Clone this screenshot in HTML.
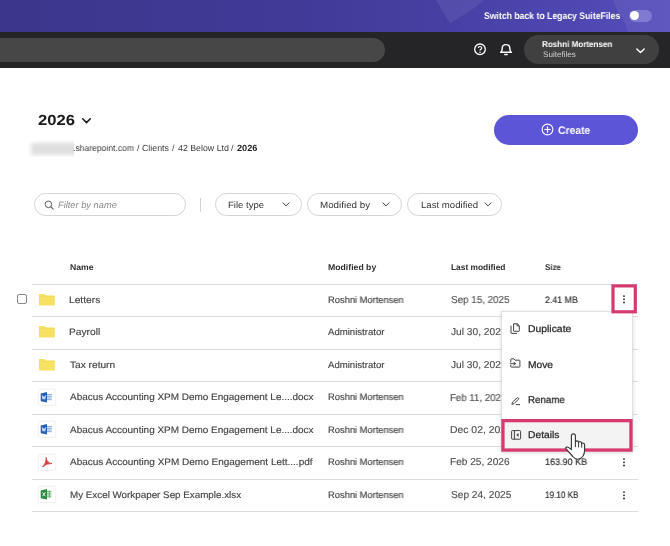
<!DOCTYPE html>
<html>
<head>
<meta charset="utf-8">
<style>
*{box-sizing:border-box;margin:0;padding:0}
html,body{width:670px;height:546px;overflow:hidden;background:#fff;font-family:"Liberation Sans",sans-serif;color:#222}
body{position:relative}
.a{position:absolute}
.t{position:absolute;white-space:nowrap;line-height:1;transform-origin:0 0;will-change:transform;text-rendering:geometricPrecision}
.ln{position:absolute;left:32px;width:606px;height:1px;background:#dcdcdc}
.pill{position:absolute;top:192.5px;height:23px;border:1px solid #d4d4d4;border-radius:12px;background:#fff}
svg{position:absolute;overflow:visible}
</style>
</head>
<body>
<!-- top purple bar -->
<div class="a" style="left:0;top:0;width:670px;height:32px;background:linear-gradient(90deg,#3b378c 0%,#403b97 45%,#4841a6 70%,#554dbb 100%)"></div>
<svg style="left:0;top:0" width="670" height="32" viewBox="0 0 670 32">
  <polygon points="436,0 484,0 476,7 450,23.5" fill="#fff" opacity="0.07"/>
  <path d="M613 0 L670 0 L670 32 L628 32 Q626 24 621 17 Q616 9 613 0 Z" fill="#fff" opacity="0.065"/>
</svg>
<div class="a" style="left:629px;top:10px;width:23px;height:11.5px;border-radius:6px;background:#807ad3"></div>
<div class="a" style="left:630.3px;top:11.2px;width:9px;height:9px;border-radius:50%;background:#fff"></div>

<!-- dark nav -->
<div class="a" style="left:0;top:32px;width:670px;height:35.5px;background:#252527"></div>
<div class="a" style="left:-20px;top:37.5px;width:405px;height:24.5px;border-radius:12.5px;background:#474747"></div>
<svg style="left:473px;top:43px" width="14" height="14" viewBox="0 0 14 14">
  <circle cx="7" cy="6.3" r="5.3" fill="none" stroke="#fff" stroke-width="1.3"/>
  <path d="M5.3 5.1 C5.3 3.0 8.7 3.0 8.7 5.0 C8.7 6.3 7 6.3 7 7.6" fill="none" stroke="#fff" stroke-width="1.2"/>
  <circle cx="7" cy="9.2" r="0.8" fill="#fff"/>
</svg>
<svg style="left:499px;top:43px" width="14" height="14" viewBox="0 0 14 14">
  <path d="M1.6 9.3 C3.2 8.2 3.2 7 3.2 5.4 C3.2 2.9 4.9 1.6 7 1.6 C9.1 1.6 10.8 2.9 10.8 5.4 C10.8 7 10.8 8.2 12.4 9.3 Z" fill="none" stroke="#fff" stroke-width="1.45" stroke-linejoin="round"/>
  <path d="M5.8 11.6 L8.2 11.6" stroke="#fff" stroke-width="1.5" stroke-linecap="round"/>
</svg>
<div class="a" style="left:523.5px;top:35.3px;width:135.8px;height:28.8px;border-radius:14.4px;background:#404040"></div>
<svg style="left:636px;top:47.8px" width="9" height="6" viewBox="0 0 9 6">
  <path d="M0.8 0.9 L4.5 4.6 L8.2 0.9" fill="none" stroke="#fff" stroke-width="1.4" stroke-linecap="round" stroke-linejoin="round"/>
</svg>

<!-- title chevron + blur -->
<svg style="left:82px;top:118px" width="9" height="6" viewBox="0 0 9 6">
  <path d="M0.7 0.8 L4.5 4.6 L8.3 0.8" fill="none" stroke="#1a1a1a" stroke-width="1.5" stroke-linecap="round" stroke-linejoin="round"/>
</svg>
<div class="a" style="left:28px;top:140px;width:45.5px;height:17px;overflow:hidden"><div class="a" style="left:3px;top:3px;width:52px;height:11.5px;background:#dedede;filter:blur(2px)"></div></div>

<!-- create button -->
<div class="a" style="left:493.5px;top:115px;width:144.5px;height:29.5px;border-radius:15px;background:#5c55d7"></div>
<svg style="left:540.5px;top:123.2px" width="13" height="13" viewBox="0 0 13 13">
  <circle cx="6.5" cy="6.5" r="5.4" fill="none" stroke="#fff" stroke-width="1.1"/>
  <path d="M6.5 3.8 L6.5 9.2 M3.8 6.5 L9.2 6.5" stroke="#fff" stroke-width="1.2" stroke-linecap="round"/>
</svg>

<!-- filters -->
<div class="pill" style="left:33.5px;width:152px"></div>
<svg style="left:44px;top:200px" width="10" height="10" viewBox="0 0 10 10">
  <circle cx="4.4" cy="4.3" r="3.3" fill="none" stroke="#555" stroke-width="0.95"/>
  <path d="M6.9 6.8 L9.2 9.1" stroke="#555" stroke-width="1.05" stroke-linecap="round"/>
</svg>
<div class="a" style="left:200px;top:197.5px;width:1px;height:14px;background:#d2d2d2"></div>
<div class="pill" style="left:215px;width:87px"></div>
<div class="pill" style="left:307px;width:95px"></div>
<div class="pill" style="left:407px;width:95px"></div>
<svg style="left:282.2px;top:202px" width="8" height="5" viewBox="0 0 8 5"><path d="M0.9 0.8 L4 3.9 L7.1 0.8" fill="none" stroke="#444" stroke-width="1" stroke-linecap="round" stroke-linejoin="round"/></svg>
<svg style="left:382.2px;top:202px" width="8" height="5" viewBox="0 0 8 5"><path d="M0.9 0.8 L4 3.9 L7.1 0.8" fill="none" stroke="#444" stroke-width="1" stroke-linecap="round" stroke-linejoin="round"/></svg>
<svg style="left:483.5px;top:202px" width="8" height="5" viewBox="0 0 8 5"><path d="M0.9 0.8 L4 3.9 L7.1 0.8" fill="none" stroke="#444" stroke-width="1" stroke-linecap="round" stroke-linejoin="round"/></svg>

<!-- table lines -->
<div class="ln" style="top:284px"></div>
<div class="ln" style="top:316px"></div>
<div class="ln" style="top:349px"></div>
<div class="ln" style="top:381px"></div>
<div class="ln" style="top:414px"></div>
<div class="ln" style="top:446px"></div>
<div class="ln" style="top:479px"></div>
<div class="ln" style="top:511px"></div>

<!-- checkbox -->
<div class="a" style="left:17.3px;top:294.2px;width:10px;height:9.8px;border:1px solid #8a8a8a;border-radius:2px;background:#fff"></div>

<!-- folders -->
<svg style="left:38.8px;top:294.2px" width="16" height="12" viewBox="0 0 16 12"><path d="M0 0.6 Q0 0 0.6 0 L5.6 0 L6.8 1.4 L15.2 1.4 Q15.8 1.4 15.8 2 L15.8 10.9 Q15.8 11.5 15.2 11.5 L0.6 11.5 Q0 11.5 0 10.9 Z" fill="#f6e163"/><path d="M0 2.3 L15.8 2.3" stroke="#ecd44f" stroke-width="0.5"/></svg>
<svg style="left:38.8px;top:326.2px" width="16" height="12" viewBox="0 0 16 12"><path d="M0 0.6 Q0 0 0.6 0 L5.6 0 L6.8 1.4 L15.2 1.4 Q15.8 1.4 15.8 2 L15.8 10.9 Q15.8 11.5 15.2 11.5 L0.6 11.5 Q0 11.5 0 10.9 Z" fill="#f6e163"/><path d="M0 2.3 L15.8 2.3" stroke="#ecd44f" stroke-width="0.5"/></svg>
<svg style="left:38.8px;top:358.7px" width="16" height="12" viewBox="0 0 16 12"><path d="M0 0.6 Q0 0 0.6 0 L5.6 0 L6.8 1.4 L15.2 1.4 Q15.8 1.4 15.8 2 L15.8 10.9 Q15.8 11.5 15.2 11.5 L0.6 11.5 Q0 11.5 0 10.9 Z" fill="#f6e163"/><path d="M0 2.3 L15.8 2.3" stroke="#ecd44f" stroke-width="0.5"/></svg>

<!-- word icons -->
<svg style="left:37.7px;top:388.8px" width="18" height="17" viewBox="0 0 18 17">
  <rect x="0.25" y="0.25" width="17.5" height="16.2" rx="1" fill="#fff" stroke="#e6e6e6" stroke-width="0.6"/>
  <path d="M9 5.6 H13.8 M9 7.3 H13.8 M9 9 H13.8 M9 10.7 H13.8" stroke="#5b8ad4" stroke-width="0.8"/>
  <path d="M2.7 4.4 L9 3.1 L9 13.5 L2.7 12.2 Z" fill="#2a5fb6"/>
  <path d="M4.2 6.4 L5.05 10.2 L5.9 7.4 L6.75 10.2 L7.6 6.4" fill="none" stroke="#fff" stroke-width="0.75"/>
</svg>
<svg style="left:37.7px;top:421.3px" width="18" height="17" viewBox="0 0 18 17">
  <rect x="0.25" y="0.25" width="17.5" height="16.2" rx="1" fill="#fff" stroke="#e6e6e6" stroke-width="0.6"/>
  <path d="M9 5.6 H13.8 M9 7.3 H13.8 M9 9 H13.8 M9 10.7 H13.8" stroke="#5b8ad4" stroke-width="0.8"/>
  <path d="M2.7 4.4 L9 3.1 L9 13.5 L2.7 12.2 Z" fill="#2a5fb6"/>
  <path d="M4.2 6.4 L5.05 10.2 L5.9 7.4 L6.75 10.2 L7.6 6.4" fill="none" stroke="#fff" stroke-width="0.75"/>
</svg>
<!-- pdf icon -->
<svg style="left:37.7px;top:453.8px" width="18" height="17" viewBox="0 0 18 17">
  <rect x="0.25" y="0.25" width="17.5" height="16.2" rx="1" fill="#fff" stroke="#e6e6e6" stroke-width="0.6"/>
  <path d="M8.2 3.7 Q8.5 8.7 14 9.5 Q8.8 9.2 4.5 12.9 Q8.5 8.9 8.2 3.7 Z" fill="#d23b42" stroke="#d23b42" stroke-width="0.75" stroke-linejoin="round" stroke-linecap="round"/>
</svg>
<!-- excel icon -->
<svg style="left:37.7px;top:486.3px" width="18" height="17" viewBox="0 0 18 17">
  <rect x="0.25" y="0.25" width="17.5" height="16.2" rx="1" fill="#fff" stroke="#e6e6e6" stroke-width="0.6"/>
  <path d="M9 5.4 H13.4 M9 7.2 H13.4 M9 9 H13.4 M9 10.8 H13.4 M11.4 4.6 V11.6" stroke="#4da05c" stroke-width="0.8"/>
  <path d="M2.7 4.4 L9 3.1 L9 13.5 L2.7 12.2 Z" fill="#2e8b42"/>
  <path d="M4.5 6.4 L7.3 10.2 M7.3 6.4 L4.5 10.2" fill="none" stroke="#fff" stroke-width="0.85"/>
</svg>

<div class="t" style="left:484.08px;top:12px;font-size:9.7px;font-weight:bold;font-style:normal;color:#fff;transform:scaleX(0.8942)">Switch back to Legacy SuiteFiles</div>
<div class="t" style="left:542.41px;top:40px;font-size:8.5px;font-weight:bold;font-style:normal;color:#fff;transform:scaleX(0.9479)">Roshni Mortensen</div>
<div class="t" style="left:542.62px;top:51px;font-size:8px;font-weight:normal;font-style:normal;color:#cfcfcf;transform:scaleX(1.0142)">Suitefiles</div>
<div class="t" style="left:38.43px;top:114px;font-size:14.6px;font-weight:bold;font-style:normal;color:#1a1a1a;transform:scaleX(1.1410)">2026</div>
<div class="t" style="left:73.07px;top:144px;font-size:8.8px;font-weight:normal;font-style:normal;color:#3a3a3a;transform:scaleX(0.9747)">.sharepoint.com</div>
<div class="t" style="left:137.01px;top:144px;font-size:8.8px;font-weight:normal;font-style:normal;color:#3a3a3a;transform:scaleX(1.0000)">/</div>
<div class="t" style="left:142.01px;top:144px;font-size:8.8px;font-weight:normal;font-style:normal;color:#3a3a3a;transform:scaleX(0.9837)">Clients</div>
<div class="t" style="left:171.61px;top:144px;font-size:8.8px;font-weight:normal;font-style:normal;color:#3a3a3a;transform:scaleX(1.0000)">/</div>
<div class="t" style="left:177.75px;top:144px;font-size:8.8px;font-weight:normal;font-style:normal;color:#3a3a3a;transform:scaleX(0.9920)">42 Below Ltd</div>
<div class="t" style="left:231.01px;top:144px;font-size:8.8px;font-weight:normal;font-style:normal;color:#3a3a3a;transform:scaleX(1.0000)">/</div>
<div class="t" style="left:236.94px;top:144px;font-size:8.8px;font-weight:bold;font-style:normal;color:#222;transform:scaleX(1.0421)">2026</div>
<div class="t" style="left:558.03px;top:126px;font-size:11px;font-weight:bold;font-style:normal;color:#fff;transform:scaleX(0.9438)">Create</div>
<div class="t" style="left:57.55px;top:201px;font-size:9.2px;font-weight:normal;font-style:italic;color:#8a8a8a;transform:scaleX(1.0100)">Filter by name</div>
<div class="t" style="left:227.52px;top:201px;font-size:9.2px;font-weight:normal;font-style:normal;color:#333;transform:scaleX(1.0379)">File type</div>
<div class="t" style="left:320.00px;top:201px;font-size:9.2px;font-weight:normal;font-style:normal;color:#333;transform:scaleX(1.0667)">Modified by</div>
<div class="t" style="left:420.52px;top:201px;font-size:9.2px;font-weight:normal;font-style:normal;color:#333;transform:scaleX(1.0460)">Last modified</div>
<div class="t" style="left:69.68px;top:263px;font-size:8.4px;font-weight:bold;font-style:normal;color:#2e2e2e;transform:scaleX(1.0318)">Name</div>
<div class="t" style="left:327.88px;top:263px;font-size:8.4px;font-weight:bold;font-style:normal;color:#2e2e2e;transform:scaleX(1.0370)">Modified by</div>
<div class="t" style="left:450.80px;top:263px;font-size:8.4px;font-weight:bold;font-style:normal;color:#2e2e2e;transform:scaleX(0.9967)">Last modified</div>
<div class="t" style="left:545.16px;top:263px;font-size:8.4px;font-weight:bold;font-style:normal;color:#2e2e2e;transform:scaleX(0.9538)">Size</div>
<div class="t" style="left:69.49px;top:296px;font-size:9.5px;font-weight:normal;font-style:normal;color:#444;-webkit-text-stroke:0.15px #444;transform:scaleX(1.0762)">Letters</div>
<div class="t" style="left:69.49px;top:328px;font-size:9.5px;font-weight:normal;font-style:normal;color:#444;-webkit-text-stroke:0.15px #444;transform:scaleX(1.0751)">Payroll</div>
<div class="t" style="left:70.03px;top:361px;font-size:9.5px;font-weight:normal;font-style:normal;color:#444;-webkit-text-stroke:0.15px #444;transform:scaleX(1.0683)">Tax return</div>
<div class="t" style="left:70.30px;top:393px;font-size:9.5px;font-weight:normal;font-style:normal;color:#444;-webkit-text-stroke:0.15px #444;transform:scaleX(1.0480)">Abacus Accounting XPM Demo Engagement Le....docx</div>
<div class="t" style="left:70.30px;top:426px;font-size:9.5px;font-weight:normal;font-style:normal;color:#444;-webkit-text-stroke:0.15px #444;transform:scaleX(1.0480)">Abacus Accounting XPM Demo Engagement Le....docx</div>
<div class="t" style="left:70.30px;top:458px;font-size:9.5px;font-weight:normal;font-style:normal;color:#444;-webkit-text-stroke:0.15px #444;transform:scaleX(1.0509)">Abacus Accounting XPM Demo Engagement Lett....pdf</div>
<div class="t" style="left:69.53px;top:491px;font-size:9.5px;font-weight:normal;font-style:normal;color:#444;-webkit-text-stroke:0.15px #444;transform:scaleX(1.0331)">My Excel Workpaper Sep Example.xlsx</div>
<div class="t" style="left:327.65px;top:295px;font-size:9.4px;font-weight:normal;font-style:normal;color:#444;-webkit-text-stroke:0.15px #444;transform:scaleX(0.9940)">Roshni Mortensen</div>
<div class="t" style="left:328.40px;top:327px;font-size:9.4px;font-weight:normal;font-style:normal;color:#444;-webkit-text-stroke:0.15px #444;transform:scaleX(1.0231)">Administrator</div>
<div class="t" style="left:328.40px;top:360px;font-size:9.4px;font-weight:normal;font-style:normal;color:#444;-webkit-text-stroke:0.15px #444;transform:scaleX(1.0231)">Administrator</div>
<div class="t" style="left:327.65px;top:392px;font-size:9.4px;font-weight:normal;font-style:normal;color:#444;-webkit-text-stroke:0.15px #444;transform:scaleX(0.9940)">Roshni Mortensen</div>
<div class="t" style="left:327.65px;top:425px;font-size:9.4px;font-weight:normal;font-style:normal;color:#444;-webkit-text-stroke:0.15px #444;transform:scaleX(0.9940)">Roshni Mortensen</div>
<div class="t" style="left:327.65px;top:457px;font-size:9.4px;font-weight:normal;font-style:normal;color:#444;-webkit-text-stroke:0.15px #444;transform:scaleX(0.9940)">Roshni Mortensen</div>
<div class="t" style="left:327.65px;top:490px;font-size:9.4px;font-weight:normal;font-style:normal;color:#444;-webkit-text-stroke:0.15px #444;transform:scaleX(0.9940)">Roshni Mortensen</div>
<div class="t" style="left:450.81px;top:296px;font-size:10px;font-weight:normal;font-style:normal;color:#505050;-webkit-text-stroke:0.15px #505050;transform:scaleX(0.9842)">Sep 15, 2025</div>
<div class="t" style="left:451.17px;top:328px;font-size:10px;font-weight:normal;font-style:normal;color:#505050;-webkit-text-stroke:0.15px #505050;transform:scaleX(1.0185)">Jul 30, 2025</div>
<div class="t" style="left:451.17px;top:361px;font-size:10px;font-weight:normal;font-style:normal;color:#505050;-webkit-text-stroke:0.15px #505050;transform:scaleX(1.0185)">Jul 30, 2025</div>
<div class="t" style="left:450.45px;top:394px;font-size:10px;font-weight:normal;font-style:normal;color:#505050;-webkit-text-stroke:0.15px #505050;transform:scaleX(0.9670)">Feb 11, 2026</div>
<div class="t" style="left:450.39px;top:426px;font-size:10px;font-weight:normal;font-style:normal;color:#505050;-webkit-text-stroke:0.15px #505050;transform:scaleX(1.0386)">Dec 02, 2025</div>
<div class="t" style="left:450.41px;top:458px;font-size:10px;font-weight:normal;font-style:normal;color:#505050;-webkit-text-stroke:0.15px #505050;transform:scaleX(1.0117)">Feb 25, 2026</div>
<div class="t" style="left:450.79px;top:491px;font-size:10px;font-weight:normal;font-style:normal;color:#505050;-webkit-text-stroke:0.15px #505050;transform:scaleX(1.0132)">Sep 24, 2025</div>
<div class="t" style="left:544.93px;top:295px;font-size:9.4px;font-weight:normal;font-style:normal;color:#333;-webkit-text-stroke:0.2px #333;transform:scaleX(0.9417)">2.41 MB</div>
<div class="t" style="left:544.68px;top:457px;font-size:9.4px;font-weight:normal;font-style:normal;color:#333;-webkit-text-stroke:0.2px #333;transform:scaleX(0.9624)">163.90 KB</div>
<div class="t" style="left:544.75px;top:490px;font-size:9.4px;font-weight:normal;font-style:normal;color:#333;-webkit-text-stroke:0.2px #333;transform:scaleX(0.8696)">19.10 KB</div>


<!-- kebabs -->
<svg style="left:623.4px;top:295px" width="2" height="9" viewBox="0 0 2 9"><circle cx="1" cy="1.1" r="0.9" fill="#222"/><circle cx="1" cy="4.3" r="0.9" fill="#222"/><circle cx="1" cy="7.5" r="0.9" fill="#222"/></svg>
<svg style="left:623.4px;top:457.5px" width="2" height="9" viewBox="0 0 2 9"><circle cx="1" cy="1.1" r="0.9" fill="#222"/><circle cx="1" cy="4.3" r="0.9" fill="#222"/><circle cx="1" cy="7.5" r="0.9" fill="#222"/></svg>
<svg style="left:623.4px;top:490.5px" width="2" height="9" viewBox="0 0 2 9"><circle cx="1" cy="1.1" r="0.9" fill="#222"/><circle cx="1" cy="4.3" r="0.9" fill="#222"/><circle cx="1" cy="7.5" r="0.9" fill="#222"/></svg>

<!-- menu -->
<div class="a" style="left:501px;top:311.3px;width:131.6px;height:140.5px;background:#fff;border:1px solid #e0e0e0;box-shadow:0 1px 4px rgba(0,0,0,0.14)"></div>
<div class="a" style="left:503px;top:421px;width:128px;height:29px;background:#f3f3f3"></div>
<!-- duplicate icon -->
<svg style="left:509.5px;top:322.5px" width="11" height="11" viewBox="0 0 11 11">
  <path d="M3.6 0.8 L7.4 0.8 L9.3 2.7 L9.3 7.8 Q9.3 8.3 8.8 8.3 L4.1 8.3 Q3.6 8.3 3.6 7.8 Z" fill="none" stroke="#383838" stroke-width="0.95" stroke-linejoin="round"/>
  <path d="M7.2 0.9 L7.2 2.9 L9.2 2.9" fill="none" stroke="#383838" stroke-width="0.95"/>
  <path d="M1 3.2 L1 9.9 Q1 10.4 1.5 10.4 L6.6 10.4" fill="none" stroke="#383838" stroke-width="0.95" stroke-linecap="round"/>
</svg>
<!-- move icon -->
<svg style="left:509.5px;top:357.5px" width="11" height="10" viewBox="0 0 11 10">
  <path d="M0.8 4 L0.8 1.3 Q0.8 0.8 1.3 0.8 L3.8 0.8 L5 2.2 L9.4 2.2 Q9.9 2.2 9.9 2.7 L9.9 8.6 Q9.9 9.1 9.4 9.1 L1.3 9.1 Q0.8 9.1 0.8 8.6 L0.8 7.4" fill="none" stroke="#383838" stroke-width="0.95" stroke-linejoin="round" stroke-linecap="round"/>
  <path d="M0.3 5.7 L5.4 5.7 M3.8 4.1 L5.4 5.7 L3.8 7.3" fill="none" stroke="#383838" stroke-width="0.95" stroke-linecap="round" stroke-linejoin="round"/>
</svg>
<!-- rename icon -->
<svg style="left:511px;top:396.5px" width="10" height="9" viewBox="0 0 10 9">
  <path d="M0.9 7.3 L1.5 5.1 L6.2 0.8 Q6.8 0.4 7.4 1 Q8 1.6 7.5 2.2 L3 6.7 Z" fill="none" stroke="#383838" stroke-width="0.95" stroke-linejoin="round"/>
  <path d="M5.2 7.6 L8.6 7.6" stroke="#383838" stroke-width="0.95" stroke-linecap="round"/>
</svg>
<!-- details icon -->
<svg style="left:511px;top:430.3px" width="11" height="10" viewBox="0 0 11 10">
  <rect x="0.6" y="0.6" width="9" height="8.6" rx="0.8" fill="none" stroke="#383838" stroke-width="0.95"/>
  <path d="M3.4 0.6 L3.4 9.2" stroke="#383838" stroke-width="0.95"/>
  <path d="M7.5 3.1 L5.3 4.9 L7.5 6.7 Z" fill="#383838"/>
</svg>
<div class="t" style="left:528.01px;top:325px;font-size:9.8px;font-weight:normal;font-style:normal;color:#2a2a2a;-webkit-text-stroke:0.25px #2a2a2a;transform:scaleX(1.0599)">Duplicate</div>
<div class="t" style="left:528.02px;top:361px;font-size:9.8px;font-weight:normal;font-style:normal;color:#2a2a2a;-webkit-text-stroke:0.25px #2a2a2a;transform:scaleX(1.0462)">Move</div>
<div class="t" style="left:528.06px;top:396px;font-size:9.8px;font-weight:normal;font-style:normal;color:#2a2a2a;-webkit-text-stroke:0.25px #2a2a2a;transform:scaleX(0.9923)">Rename</div>
<div class="t" style="left:528.01px;top:431px;font-size:9.8px;font-weight:normal;font-style:normal;color:#2a2a2a;-webkit-text-stroke:0.25px #2a2a2a;transform:scaleX(1.0494)">Details</div>


<!-- pink highlights -->
<svg style="left:0;top:0" width="670" height="546" viewBox="0 0 670 546">
  <rect x="613" y="285.9" width="22.3" height="25.9" fill="none" stroke="#d63a6f" stroke-width="3.2"/>
  <rect x="502.95" y="420.65" width="128" height="29.4" fill="none" stroke="#d63a6f" stroke-width="3.3"/>
</svg>

<!-- hand cursor -->
<svg style="left:564px;top:432.5px" width="23" height="29" viewBox="0 0 23 29">
  <path d="M7.4 16.6 L7.4 2.8 Q7.4 0.8 9.4 0.8 Q11.4 0.8 11.4 2.8 L11.4 9.2 Q11.6 7.8 13 7.8 Q14.6 7.8 14.6 9.6 Q14.8 8.5 16.1 8.5 Q17.6 8.5 17.7 10.6 Q18 9.9 19.1 10 Q20.6 10.2 20.6 12 L20.6 17 Q20.6 21 18.8 23.5 Q16.5 26.3 13.5 26.2 Q10.8 26 8.8 23.5 L2 15.8 Q1.2 14.6 2.4 14.1 Q3.6 13.7 4.8 14.6 Z" fill="#fff" stroke="#383838" stroke-width="1.15" stroke-linejoin="round"/>
  <path d="M11.4 9 L11.4 13.6 M14.6 9.6 L14.6 13.9 M17.7 10.6 L17.7 14.2" stroke="#383838" stroke-width="1.05" stroke-linecap="round"/>
</svg>
</body>
</html>
